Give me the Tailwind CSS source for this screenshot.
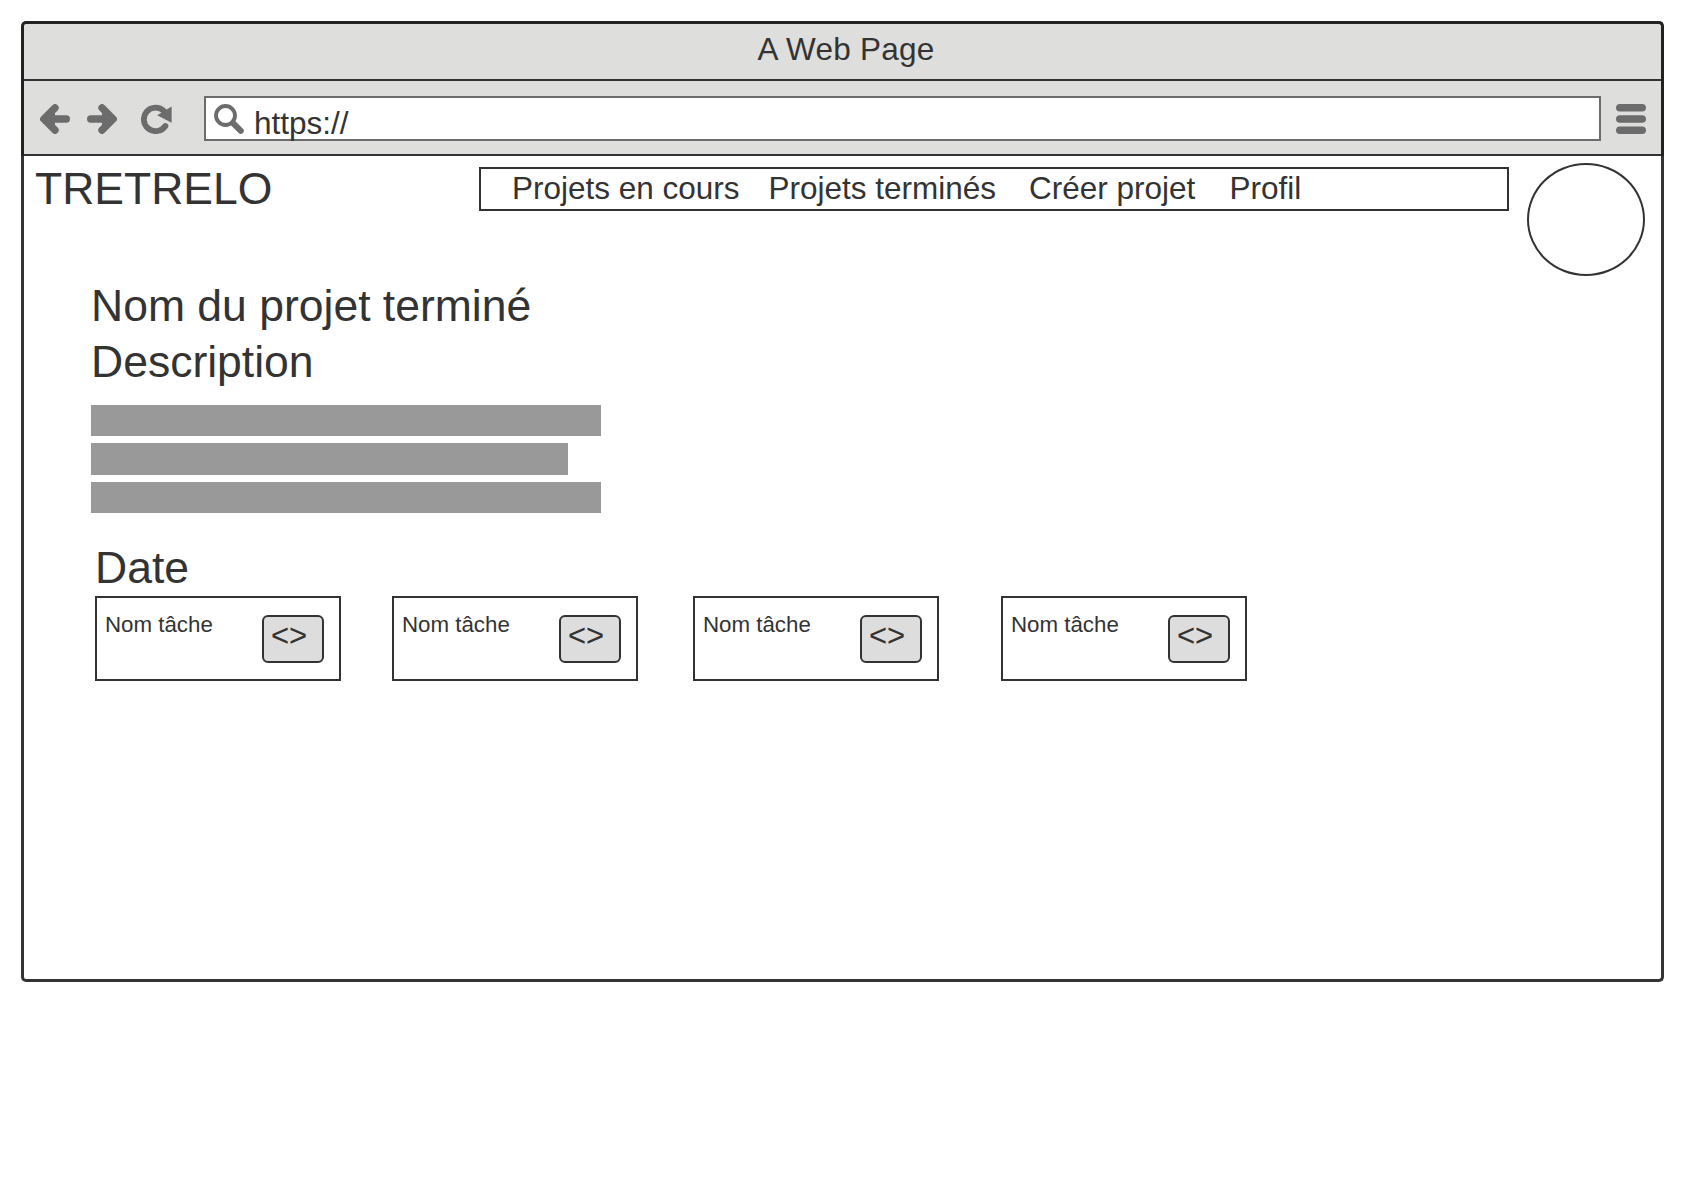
<!DOCTYPE html>
<html lang="fr">
<head>
<meta charset="utf-8">
<title>Tretrelo</title>
<script src="https://cdn.jsdelivr.net/npm/@tailwindcss/browser@4"></script>
</head>
<body class="bg-white p-[21px] font-['Liberation_Sans',Arial,sans-serif] text-[31.5px] leading-9 text-[#333333]">
<div class="flex h-[961px] w-[1643px] flex-col">
  <!-- Browser chrome -->
  <header class="shrink-0 rounded-t-[5px] border-x-3 border-t-3 border-[#212322] bg-[#dededc]">
    <div class="h-[57px] border-b-2 border-[#333333] pt-[7px] pl-[733.5px] tracking-[0.25px]">A Web Page</div>
    <div class="flex h-[75px] items-start border-b-2 border-[#333333] pt-[15px] pl-4">
      <svg class="mt-[7.5px] h-[30px] w-[30px] shrink-0" viewBox="0 0 30 30" fill="none" stroke="#6c6c6c" stroke-width="7.4" stroke-linecap="round" stroke-linejoin="round"><path d="M15 3.8 3.8 15 15 26.2M5 15H26.3"/><path d="M15 6 6 15l9 9z" fill="#6c6c6c" stroke="none"/></svg>
      <svg class="mt-[7.5px] ml-[17px] h-[30px] w-[30px] shrink-0" viewBox="0 0 30 30" fill="none" stroke="#6c6c6c" stroke-width="7.4" stroke-linecap="round" stroke-linejoin="round"><path d="M15 3.8 26.2 15 15 26.2M25 15H3.7"/><path d="M15 6 24 15l-9 9z" fill="#6c6c6c" stroke="none"/></svg>
      <svg class="mt-[7.5px] ml-6 h-[30px] w-[31px] shrink-0" viewBox="0 0 31 30"><path d="M24.4 22A11.8 11.8 0 1 1 23 7" fill="none" stroke="#6c6c6c" stroke-width="5.8" stroke-linecap="round"/><path d="M30.6 2.6V18.8L16.2 11.2z" fill="#6c6c6c"/></svg>
      <div class="ml-8 flex h-[45px] w-[1397px] shrink-0 border-2 border-[#6c6c6c] bg-white pl-2">
        <svg class="mt-[5.5px] h-[30px] w-[30px] shrink-0" viewBox="0 0 30 30" fill="none" stroke="#6c6c6c"><circle cx="11.5" cy="11.5" r="9.5" stroke-width="3.9"/><path d="M19.3 19.3 26.8 26.8" stroke-width="6" stroke-linecap="round"/></svg>
        <span class="mt-[7px] ml-[10px]">https://</span>
      </div>
      <svg class="mt-[7.5px] ml-[14.5px] h-[30px] w-[30px] shrink-0" viewBox="0 0 30 30" fill="#6c6c6c"><rect width="30" height="7.6" rx="3.8"/><rect y="11.2" width="30" height="7.6" rx="3.8"/><rect y="22.4" width="30" height="7.6" rx="3.8"/></svg>
    </div>
  </header>

  <main class="flex-1 rounded-b-[5px] border-x-3 border-b-3 border-[#333535]">
    <div class="flex h-[122px] items-start">
      <div class="mt-[5px] w-[455px] shrink-0 pl-[11px] text-[44.5px] leading-[56px]">TRETRELO</div>
      <nav class="mt-[11px] flex h-[44px] w-[1030px] shrink-0 border-2 border-[#333333] pt-px pl-[31px]">
        <a class="w-[256.5px]">Projets en cours</a>
        <a class="w-[260.5px]">Projets terminés</a>
        <a class="w-[200.5px]">Créer projet</a>
        <a>Profil</a>
      </nav>
      <div class="mt-[7px] ml-[18px] h-[113px] w-[118px] shrink-0 rounded-[50%] border-2 border-[#333333]"></div>
    </div>

    <section class="pl-[67px]">
      <div class="text-[44.5px] leading-[56px]">
        <h1>Nom du projet terminé</h1>
        <h2>Description</h2>
      </div>
      <div class="mt-[14.5px] flex flex-col gap-[7px]">
        <div class="h-[31.5px] w-[510px] bg-[#999999]"></div>
        <div class="h-[31.5px] w-[477px] bg-[#999999]"></div>
        <div class="h-[31.5px] w-[510px] bg-[#999999]"></div>
      </div>
    </section>

    <section class="mt-[27px] pl-[71px]">
      <h2 class="text-[44.5px] leading-[56px]">Date</h2>
      <div class="flex">
        <div class="flex h-[85px] w-[246px] justify-between border-2 border-[#333333] pt-[14px] pr-[15px] pl-2">
          <span class="text-[22.3px] leading-[26px]">Nom tâche</span>
          <button class="mt-[3px] flex h-[48px] w-[62px] rounded-[6px] border-2 border-[#333333] bg-[#dddddd] pt-px pl-[7px] text-[31px]">&lt;&gt;</button>
        </div>
        <div class="ml-[51px] flex h-[85px] w-[246px] justify-between border-2 border-[#333333] pt-[14px] pr-[15px] pl-2">
          <span class="text-[22.3px] leading-[26px]">Nom tâche</span>
          <button class="mt-[3px] flex h-[48px] w-[62px] rounded-[6px] border-2 border-[#333333] bg-[#dddddd] pt-px pl-[7px] text-[31px]">&lt;&gt;</button>
        </div>
        <div class="ml-[55px] flex h-[85px] w-[246px] justify-between border-2 border-[#333333] pt-[14px] pr-[15px] pl-2">
          <span class="text-[22.3px] leading-[26px]">Nom tâche</span>
          <button class="mt-[3px] flex h-[48px] w-[62px] rounded-[6px] border-2 border-[#333333] bg-[#dddddd] pt-px pl-[7px] text-[31px]">&lt;&gt;</button>
        </div>
        <div class="ml-[62px] flex h-[85px] w-[246px] justify-between border-2 border-[#333333] pt-[14px] pr-[15px] pl-2">
          <span class="text-[22.3px] leading-[26px]">Nom tâche</span>
          <button class="mt-[3px] flex h-[48px] w-[62px] rounded-[6px] border-2 border-[#333333] bg-[#dddddd] pt-px pl-[7px] text-[31px]">&lt;&gt;</button>
        </div>
      </div>
    </section>
  </main>
</div>
</body>
</html>
